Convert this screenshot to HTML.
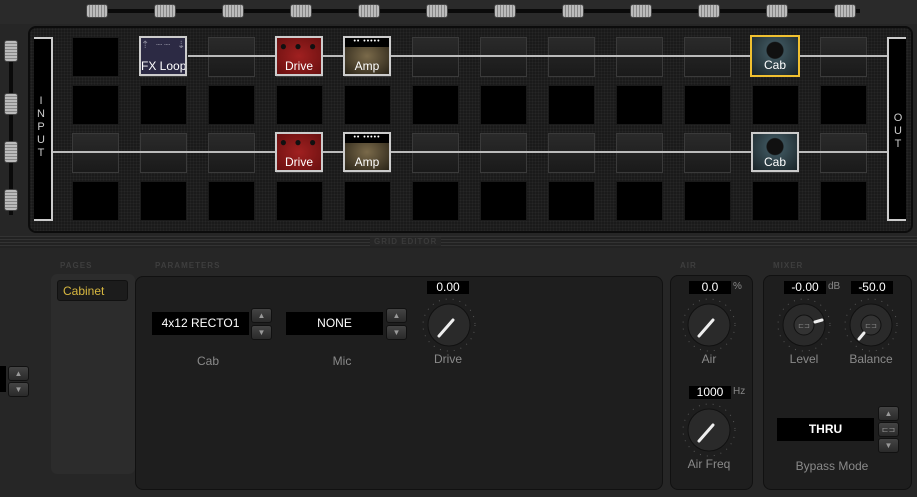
<!DOCTYPE html><html><head><style>
*{margin:0;padding:0;box-sizing:border-box}
body{width:917px;height:497px;background:#262626;position:relative;overflow:hidden;font-family:"Liberation Sans",sans-serif;color:#ddd}
.a{position:absolute}
.topbar{left:0;top:0;width:917px;height:24px;background:#2a2a2a}
.rail{background:#0a0a0a}
.sl{width:22px;height:14px;background:repeating-linear-gradient(90deg,#bbb 0 2px,#888 2px 3px);border-radius:3px;border:1px solid #444}
.slv{width:14px;height:22px;background:repeating-linear-gradient(#bbb 0 2px,#888 2px 3px);border-radius:3px;border:1px solid #444}
.grid{left:28px;top:26px;width:885px;height:207px;background:#1a1a1a;border-radius:8px;border:2px solid #0c0c0c;background-image:radial-gradient(#262626 1px,transparent 1px);background-size:3px 3px}
.c{width:47px;height:40px;background:#000;border:1px solid #1a1a1a}
.g{background:linear-gradient(#2a2a2a,#1a1a1a);border:1px solid #3a3a3a}
.line{height:2px;background:#bbb}
.blk{width:48px;height:40px;border:2px solid #ccc;font-size:12px;color:#fff;text-align:center;line-height:14px;padding-top:21px;white-space:nowrap;overflow:hidden}
.drive{background:radial-gradient(#a02020,#6a1010)}
.amp{background:radial-gradient(#7a6a4a,#2a2418)}
.cab{background:radial-gradient(circle at 50% 35%,#111 0 8px,#3a5058 9px,#1a2428)}
.fx{background:#2c2a44}
.lbl{font-size:8px;font-weight:bold;color:#3e3e3e;letter-spacing:1px}
.panel{background:#1e1e1e;border-radius:8px;border:1px solid #111}
.disp{background:#000;color:#fff;font-size:12px;text-align:center}
.btn{width:21px;height:15px;background:linear-gradient(#444,#2a2a2a);border:1px solid #111;border-radius:3px;color:#999;font-size:8px;text-align:center;line-height:13px}
.cap{font-size:12px;color:#8a8a8a;text-align:center}
.dots{position:absolute;left:0;right:0;top:4px;font-size:10px;line-height:8px;letter-spacing:2px}
</style></head><body>
<div class="a topbar"></div>
<div class="a rail" style="left:90px;top:9px;width:770px;height:4px"></div>
<div class="a" style="left:0;top:236px;width:917px;height:12px;background:repeating-linear-gradient(#333 0 1px,#222 1px 3px)"></div>
<div class="a" style="left:370px;top:237px;font-size:8px;font-weight:bold;color:#3a3a3a;background:#262626;padding:0 4px;letter-spacing:1px">GRID EDITOR</div>
<div class="a rail" style="left:9px;top:40px;width:4px;height:175px"></div>
<div class="a grid"></div>
<script>
var h='';var tops=[37,85,133,181];
for(var r=0;r<4;r++)for(var k=0;k<12;k++){var x=72+68*k;var g=(r==0&&k>0)||(r==2);h+='<div class="a c'+(g?' g':'')+'" style="left:'+x+'px;top:'+tops[r]+'px"></div>';}
for(var k=0;k<12;k++)h+='<div class="a sl" style="left:'+(86+68*k)+'px;top:4px"></div>';
[40,93,141,189].forEach(function(y){h+='<div class="a slv" style="left:4px;top:'+y+'px"></div>'});
document.write(h);
</script>
<div class="a line" style="left:188px;top:55px;width:700px"></div>
<div class="a line" style="left:52px;top:151px;width:836px"></div>
<div class="a" style="left:34px;top:37px;width:19px;height:184px;border:2px solid #ccc;border-left:none;background:#000"></div>
<div class="a" style="left:36px;top:95px;font-size:11px;color:#ccc;width:10px;line-height:13px;text-align:center">I N P U T</div>
<div class="a" style="left:887px;top:37px;width:19px;height:184px;border:2px solid #ccc;border-right:none;background:#000"></div>
<div class="a" style="left:893px;top:112px;font-size:11px;color:#ccc;width:10px;line-height:13px;text-align:center">O U T</div>
<div class="a blk fx" style="left:139px;top:36px"><span class="dots" style="color:#889">⇡ ┈┈ ⇣</span>FX Loop</div>
<div class="a blk drive" style="left:275px;top:36px"><span class="dots" style="color:#111;font-size:12px">● ● ●</span>Drive</div>
<div class="a blk amp" style="left:343px;top:36px;background:linear-gradient(#000 0 9px,transparent 9px),radial-gradient(#7a6a4a,#2a2418)"><span class="dots" style="top:0;font-size:7px;letter-spacing:1px">•• •••••</span>Amp</div>
<div class="a blk cab" style="left:750px;top:35px;border-color:#f0c030;width:50px;height:42px">Cab</div>
<div class="a blk drive" style="left:275px;top:132px"><span class="dots" style="color:#111;font-size:12px">● ● ●</span>Drive</div>
<div class="a blk amp" style="left:343px;top:132px;background:linear-gradient(#000 0 9px,transparent 9px),radial-gradient(#7a6a4a,#2a2418)"><span class="dots" style="top:0;font-size:7px;letter-spacing:1px">•• •••••</span>Amp</div>
<div class="a blk cab" style="left:751px;top:132px">Cab</div>

<div class="a lbl" style="left:60px;top:261px">PAGES</div>
<div class="a lbl" style="left:155px;top:261px">PARAMETERS</div>
<div class="a lbl" style="left:680px;top:261px">AIR</div>
<div class="a lbl" style="left:773px;top:261px">MIXER</div>
<div class="a" style="left:51px;top:274px;width:84px;height:200px;background:#2c2c2c;border-radius:6px"></div>
<div class="a" style="left:57px;top:280px;width:71px;height:21px;background:#1c1c1c;border:1px solid #111;border-radius:3px;color:#d8b840;font-size:12px;padding:3px 5px">Cabinet</div>
<div class="a" style="left:0;top:366px;width:6px;height:26px;background:#000"></div>
<div class="a btn" style="left:8px;top:366px">▲</div><div class="a btn" style="left:8px;top:382px">▼</div>
<div class="a panel" style="left:135px;top:276px;width:528px;height:214px"></div>
<div class="a disp" style="left:152px;top:312px;width:97px;height:23px;line-height:23px">4x12 RECTO1</div>
<div class="a btn" style="left:251px;top:308px">▲</div><div class="a btn" style="left:251px;top:325px">▼</div>
<div class="a cap" style="left:152px;top:354px;width:112px">Cab</div>
<div class="a disp" style="left:286px;top:312px;width:97px;height:23px;line-height:23px">NONE</div>
<div class="a btn" style="left:386px;top:308px">▲</div><div class="a btn" style="left:386px;top:325px">▼</div>
<div class="a cap" style="left:286px;top:354px;width:112px">Mic</div>
<div class="a disp" style="left:427px;top:281px;width:42px;height:13px;line-height:13px">0.00</div>
<svg class="a" style="left:422px;top:298px" width="54" height="54"><circle cx="27" cy="27" r="26" fill="none" stroke="#555" stroke-dasharray="1 6"/><circle cx="27" cy="27" r="21" fill="#2a2a2a" stroke="#111"/><line x1="17" y1="38" x2="31" y2="22" stroke="#eee" stroke-width="3" stroke-linecap="round"/></svg>
<div class="a cap" style="left:422px;top:352px;width:52px">Drive</div>

<div class="a panel" style="left:670px;top:275px;width:83px;height:215px"></div>
<div class="a disp" style="left:689px;top:281px;width:42px;height:13px;line-height:13px">0.0</div><div class="a" style="left:733px;top:281px;font-size:10px;color:#888">%</div>
<svg class="a" style="left:682px;top:298px" width="54" height="54"><circle cx="27" cy="27" r="26" fill="none" stroke="#555" stroke-dasharray="1 6"/><circle cx="27" cy="27" r="21" fill="#2a2a2a" stroke="#111"/><line x1="17" y1="38" x2="31" y2="22" stroke="#eee" stroke-width="3" stroke-linecap="round"/></svg>
<div class="a cap" style="left:682px;top:352px;width:54px">Air</div>
<div class="a disp" style="left:689px;top:386px;width:42px;height:13px;line-height:13px">1000</div><div class="a" style="left:733px;top:386px;font-size:10px;color:#888">Hz</div>
<svg class="a" style="left:682px;top:403px" width="54" height="54"><circle cx="27" cy="27" r="26" fill="none" stroke="#555" stroke-dasharray="1 6"/><circle cx="27" cy="27" r="21" fill="#2a2a2a" stroke="#111"/><line x1="17" y1="38" x2="31" y2="22" stroke="#eee" stroke-width="3" stroke-linecap="round"/></svg>
<div class="a cap" style="left:682px;top:457px;width:54px">Air Freq</div>

<div class="a panel" style="left:763px;top:275px;width:149px;height:215px"></div>
<div class="a disp" style="left:784px;top:281px;width:42px;height:13px;line-height:13px">-0.00</div><div class="a" style="left:828px;top:281px;font-size:10px;color:#888">dB</div>
<div class="a disp" style="left:851px;top:281px;width:42px;height:13px;line-height:13px">-50.0</div>
<svg class="a" style="left:777px;top:298px" width="54" height="54"><circle cx="27" cy="27" r="26" fill="none" stroke="#555" stroke-dasharray="1 6"/><circle cx="27" cy="27" r="21" fill="#2a2a2a" stroke="#111"/><circle cx="27" cy="27" r="10" fill="#333" stroke="#111"/><line x1="38" y1="24" x2="45" y2="22" stroke="#eee" stroke-width="3" stroke-linecap="round"/><text x="27" y="30" font-size="7" fill="#888" text-anchor="middle">⊏⊐</text></svg>
<div class="a cap" style="left:777px;top:352px;width:54px">Level</div>
<svg class="a" style="left:844px;top:298px" width="54" height="54"><circle cx="27" cy="27" r="26" fill="none" stroke="#555" stroke-dasharray="1 6"/><circle cx="27" cy="27" r="21" fill="#2a2a2a" stroke="#111"/><circle cx="27" cy="27" r="10" fill="#333" stroke="#111"/><line x1="15" y1="41" x2="20" y2="35" stroke="#eee" stroke-width="3" stroke-linecap="round"/><text x="27" y="30" font-size="7" fill="#888" text-anchor="middle">⊏⊐</text></svg>
<div class="a cap" style="left:844px;top:352px;width:54px">Balance</div>
<div class="a disp" style="left:777px;top:418px;width:97px;height:23px;line-height:23px;font-weight:bold">THRU</div>
<div class="a btn" style="left:878px;top:406px">▲</div><div class="a btn" style="left:878px;top:422px">⊏⊐</div><div class="a btn" style="left:878px;top:438px">▼</div>
<div class="a cap" style="left:777px;top:459px;width:110px">Bypass Mode</div>
</body></html>
